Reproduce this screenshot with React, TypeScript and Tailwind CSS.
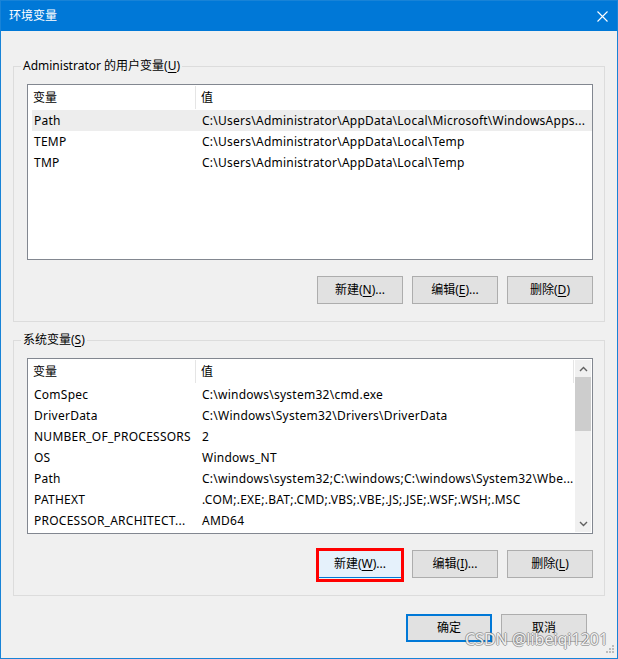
import React from "react";

type Row = { name: string; value: string; selected?: boolean };

const userRows: Row[] = [
  { name: "Path", value: "C:\\Users\\Administrator\\AppData\\Local\\Microsoft\\WindowsApps...", selected: true },
  { name: "TEMP", value: "C:\\Users\\Administrator\\AppData\\Local\\Temp" },
  { name: "TMP", value: "C:\\Users\\Administrator\\AppData\\Local\\Temp" },
];

const sysRows: Row[] = [
  { name: "ComSpec", value: "C:\\windows\\system32\\cmd.exe" },
  { name: "DriverData", value: "C:\\Windows\\System32\\Drivers\\DriverData" },
  { name: "NUMBER_OF_PROCESSORS", value: "2" },
  { name: "OS", value: "Windows_NT" },
  { name: "Path", value: "C:\\windows\\system32;C:\\windows;C:\\windows\\System32\\Wbe..." },
  { name: "PATHEXT", value: ".COM;.EXE;.BAT;.CMD;.VBS;.VBE;.JS;.JSE;.WSF;.WSH;.MSC" },
  { name: "PROCESSOR_ARCHITECT...", value: "AMD64" },
];

function Label({ pre, key1, post }: { pre: string; key1: string; post: string }) {
  return (
    <span>
      {pre}
      <span className="underline underline-offset-2">{key1}</span>
      {post}
    </span>
  );
}

function Btn({
  children,
  variant = "normal",
}: {
  children: React.ReactNode;
  variant?: "normal" | "hover" | "default";
}) {
  const cls =
    variant === "hover"
      ? "border border-[#0078d7] bg-[#e5f1fb]"
      : variant === "default"
      ? "border-2 border-[#0078d7] bg-[#e1e1e1]"
      : "border border-[#adadad] bg-[#e1e1e1]";
  return (
    <div className={`w-[86px] h-[28px] flex items-center justify-center ${cls}`}>
      {children}
    </div>
  );
}

function ListView({ rows, scroll }: { rows: Row[]; scroll?: boolean }) {
  return (
    <div className="h-[176px] border border-[#828790] bg-white flex overflow-hidden">
      <div className="flex-1 flex flex-col min-w-0">
        <div className="h-[25px] flex shrink-0">
          <div className="w-[168px] pl-[5px] flex items-center border-r border-[#e5e5e5] my-[1px]">变量</div>
          <div className={`flex-1 pl-[5px] flex items-center my-[1px] ${scroll ? "border-r border-[#e5e5e5]" : ""}`}>值</div>
        </div>
        <div className="flex flex-col pl-[4px] tracking-[0.25px]">
          {rows.map((r, i) => (
            <div
              key={i}
              className={`h-[21px] flex items-center whitespace-nowrap ${r.selected ? "bg-[#ededed]" : ""}`}
            >
              <div className="w-[165px] pl-[2px] overflow-hidden">{r.name}</div>
              <div className="flex-1 pl-[5px] overflow-hidden">{r.value}</div>
            </div>
          ))}
        </div>
      </div>
      {scroll && (
        <div className="w-[16px] my-[1px] mr-[1px] ml-[1px] bg-[#f0f0f0] flex flex-col">
          <div className="h-[17px] flex items-center justify-center">
            <svg width="9" height="6" viewBox="0 0 9 6">
              <polyline points="1,5 4.5,1.5 8,5" fill="none" stroke="#606060" strokeWidth="1.4" />
            </svg>
          </div>
          <div className="h-[54px] bg-[#cdcdcd]" />
          <div className="flex-1" />
          <div className="h-[17px] flex items-center justify-center">
            <svg width="9" height="6" viewBox="0 0 9 6">
              <polyline points="1,1 4.5,4.5 8,1" fill="none" stroke="#606060" strokeWidth="1.4" />
            </svg>
          </div>
        </div>
      )}
    </div>
  );
}

export default function App() {
  return (
    <div className="w-[618px] h-[659px] border border-[#1883d7] bg-[#f0f0f0] flex flex-col relative text-[12px] text-black [font-family:'Noto_Sans','Noto_Sans_CJK_SC',sans-serif] overflow-hidden">
      <div className="h-[30px] bg-[#0078d7] flex items-center justify-between pl-[8px] pr-[9px] text-white shrink-0">
        <span className="leading-[16px]">环境变量</span>
        <svg width="11" height="11" viewBox="0 0 11 11">
          <path d="M0.5 0.5 L10.5 10.5 M10.5 0.5 L0.5 10.5" stroke="white" strokeWidth="1.1" />
        </svg>
      </div>
      <div className="flex-1 px-[12px] flex flex-col">
        <fieldset className="mt-[27px] border border-[#dcdcdc] pl-[13px] pr-[11px] pt-[10px] pb-[17px]">
          <legend className="-ml-[6px] px-[2px] leading-[16px]">
            <Label pre="Administrator 的用户变量(" key1="U" post=")" />
          </legend>
          <ListView rows={userRows} />
          <div className="mt-[16px] flex justify-end gap-[9px]">
            <Btn><Label pre="新建(" key1="N" post=")..." /></Btn>
            <Btn><Label pre="编辑(" key1="E" post=")..." /></Btn>
            <Btn><Label pre="删除(" key1="D" post=")" /></Btn>
          </div>
        </fieldset>
        <fieldset className="mt-[10px] border border-[#dcdcdc] pl-[13px] pr-[11px] pt-[10px] pb-[17px]">
          <legend className="-ml-[6px] px-[2px] leading-[16px]">
            <Label pre="系统变量(" key1="S" post=")" />
          </legend>
          <ListView rows={sysRows} scroll />
          <div className="mt-[16px] flex justify-end gap-[9px]">
            <div className="relative">
              <Btn variant="hover"><Label pre="新建(" key1="W" post=")..." /></Btn>
              <div className="absolute left-[-1px] top-[-2px] w-[88px] h-[34px] border-[3px] border-[#ff0000] pointer-events-none" />
            </div>
            <Btn><Label pre="编辑(" key1="I" post=")..." /></Btn>
            <Btn><Label pre="删除(" key1="L" post=")" /></Btn>
          </div>
        </fieldset>
        <div className="mt-[18px] pr-[18px] flex justify-end gap-[9px]">
          <Btn variant="default">确定</Btn>
          <Btn>取消</Btn>
        </div>
      </div>
      <div className="absolute left-[464px] top-[628px] text-[16px] leading-[20px] text-[rgba(255,255,255,0.9)] [text-shadow:1px_0_0_rgba(110,110,110,0.55),-1px_0_0_rgba(110,110,110,0.55),0_1px_0_rgba(110,110,110,0.55),0_-1px_0_rgba(110,110,110,0.55)] pointer-events-none whitespace-nowrap">
        CSDN @libeiqi1201
      </div>
      <svg className="absolute right-[2px] bottom-[2px]" width="12" height="12" viewBox="0 0 12 12">
        <rect x="9" y="1" width="2" height="2" fill="#bcbcbc" />
        <rect x="6" y="4" width="2" height="2" fill="#bcbcbc" />
        <rect x="9" y="4" width="2" height="2" fill="#bcbcbc" />
        <rect x="3" y="7" width="2" height="2" fill="#bcbcbc" />
        <rect x="6" y="7" width="2" height="2" fill="#bcbcbc" />
        <rect x="9" y="7" width="2" height="2" fill="#bcbcbc" />
      </svg>
    </div>
  );
}
